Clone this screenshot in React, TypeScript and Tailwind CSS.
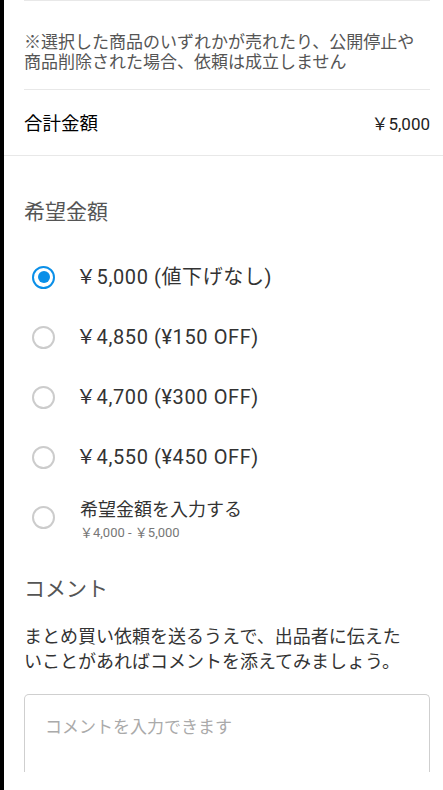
import { useState } from 'react'

const options = [
  { id: 0, label: '￥5,000 (値下げなし)' },
  { id: 1, label: '￥4,850 (¥150 OFF)' },
  { id: 2, label: '￥4,700 (¥300 OFF)' },
  { id: 3, label: '￥4,550 (¥450 OFF)' },
]

function Radio({ checked }: { checked: boolean }) {
  return checked ? (
    <span className="flex h-[23px] w-[23px] shrink-0 items-center justify-center rounded-full border-[2.5px] border-[#0a8fe8]">
      <span className="h-[12px] w-[12px] rounded-full bg-[#0a8fe8]" />
    </span>
  ) : (
    <span className="h-[23px] w-[23px] shrink-0 rounded-full border-2 border-[#cccccc]" />
  )
}

export default function App() {
  const [selected, setSelected] = useState(0)
  const [comment, setComment] = useState('')

  return (
    <div
      className="flex min-h-[790px] bg-black"
      style={{ fontFamily: 'Roboto, "Noto Sans CJK JP", sans-serif' }}
    >
      {/* 左端の黒い帯 */}
      <div className="w-1 shrink-0 bg-black" />

      <div className="flex-1 bg-white">
        <div className="pl-5 pr-[13px]">
          {/* 注意書き */}
          <div className="border-t border-[#e8e8e8] pb-[17px] pt-[31px] text-[17px] leading-[20px] text-[#555]">
            ※選択した商品のいずれかが売れたり、公開停止や
            <br />
            商品削除された場合、依頼は成立しません
          </div>

          {/* 合計金額 */}
          <div className="flex h-[66px] items-center justify-between border-t border-[#e8e8e8] pt-[5px]">
            <span className="text-[18.5px] text-black">合計金額</span>
            <span className="text-[17px] text-[#222]">￥5,000</span>
          </div>
        </div>

        <div className="border-t border-[#e8e8e8]" />

        <div className="pl-5 pr-[13px]">
          {/* 希望金額 */}
          <h2 className="pt-[42px] text-[21px] leading-[28px] text-[#555]">希望金額</h2>

          <div className="mt-[21px] flex flex-col">
            {options.map((o) => (
              <button
                key={o.id}
                onClick={() => setSelected(o.id)}
                className="flex h-[60px] items-center text-left"
              >
                <span className="flex w-[52px] justify-start pl-[8px]">
                  <Radio checked={selected === o.id} />
                </span>
                <span className="text-[20px] tracking-[0.6px] text-[#333]">{o.label}</span>
              </button>
            ))}
            <button
              onClick={() => setSelected(4)}
              className="flex h-[60px] items-center text-left"
            >
              <span className="flex w-[56px] justify-start pl-[8px]">
                <Radio checked={selected === 4} />
              </span>
              <span className="flex flex-col pt-[6px]">
                <span className="text-[18px] leading-[23px] text-[#333]">希望金額を入力する</span>
                <span className="mt-[3px] text-[13px] leading-[18px] text-[#777]">￥4,000 - ￥5,000</span>
              </span>
            </button>
          </div>

          {/* コメント */}
          <h2 className="mt-[28px] text-[21px] leading-[28px] text-[#555]">コメント</h2>
          <p className="mt-[21px] text-[18px] leading-[25px] text-[#333]">
            まとめ買い依頼を送るうえで、出品者に伝えた
            <br />
            いことがあればコメントを添えてみましょう。
          </p>

          <div className="mt-[20px] h-[78px] rounded-t-[5px] border-x border-t border-[#cfcfcf]">
            <textarea
              value={comment}
              onChange={(e) => setComment(e.target.value)}
              placeholder="コメントを入力できます"
              className="h-full w-full resize-none bg-transparent px-5 pt-[20px] text-[17px] leading-[24px] text-[#333] outline-none placeholder:text-[#aaa]"
            />
          </div>
        </div>
      </div>
    </div>
  )
}
